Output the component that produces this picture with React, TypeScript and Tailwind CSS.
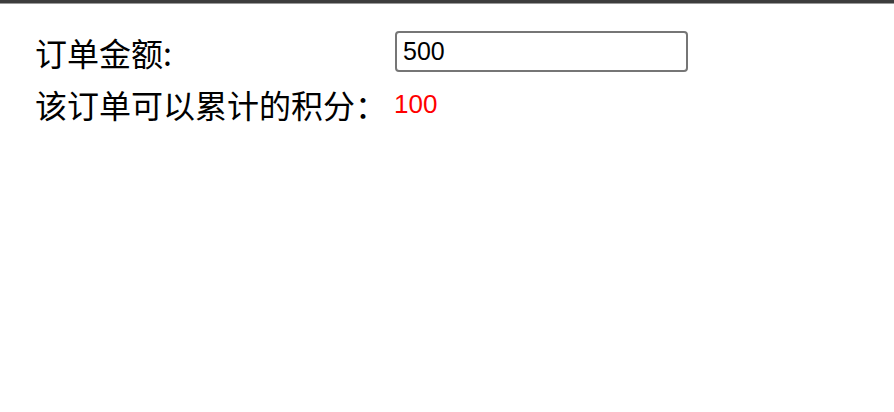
import React, { useState } from "react";

const App = () => {
  const [amount, setAmount] = useState("500");
  const points = Math.floor((Number(amount) || 0) / 5);

  return (
    <div className="min-h-screen w-full bg-white font-['Liberation_Sans','Noto_Sans_CJK_SC',sans-serif] text-black">
      {/* TOP EDGE */}
      <div className="h-[3px] w-full bg-[#3d3d3d]" />
      <div className="h-px w-full bg-[#9a9a9a]" />

      <div className="flex flex-col pl-[35px] pt-[27px]">
        {/* AMOUNT ROW */}
        <div className="flex h-[41px] items-center">
          <span className="w-[360px] font-['Noto_Sans_CJK_SC',sans-serif] text-[32px] leading-none">
            订单金额:
          </span>
          <input
            value={amount}
            onChange={(e) => setAmount(e.target.value)}
            className="h-[41px] w-[293px] rounded-[4px] border-2 border-[#767676] bg-white px-[6px] text-[25px] leading-none outline-none"
          />
        </div>

        {/* POINTS ROW */}
        <div className="mt-[12px] flex h-[40px] items-center">
          <span className="w-[359px] font-['Noto_Sans_CJK_SC',sans-serif] text-[32px] leading-none">
            该订单可以累计的积分：
          </span>
          <span className="text-[26px] leading-none text-[#ff0000]">{points}</span>
        </div>
      </div>
    </div>
  );
};

export default App;
